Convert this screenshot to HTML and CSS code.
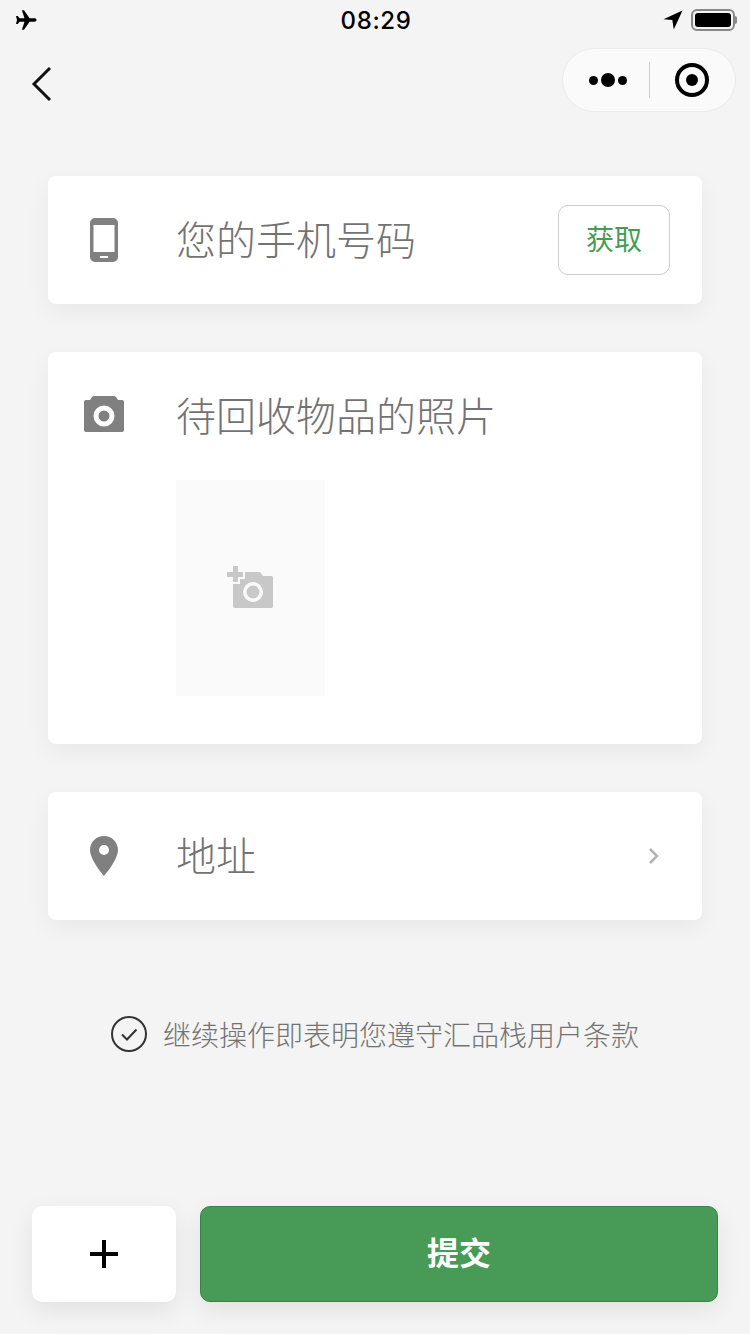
FILE: index.html
```html
<!DOCTYPE html>
<html lang="zh">
<head>
    <meta charset="utf-8">
    <title>提交</title>
    <link rel="stylesheet" href="styles.css">
</head>
<body>
    <div class="page">
        <div class="status-bar">
            <svg class="plane" width="24" height="22" viewBox="0 0 24 22">
                <path d="M21.5 11c0-1.100-1-1.700-2.200-1.700h-4.700L9 1.200H6.900l2.600 8.100H4.600L2.700 7H1l1 4-1 4h1.700l1.900-2.300h4.900L6.900 20.800H9l5.600-8.100h4.700c1.200 0 2.200-.6 2.200-1.700z" fill="#000"/>
            </svg>
            <span class="time">08:29</span>
            <div class="status-right">
                <svg width="20" height="20" viewBox="0 0 20 20">
                    <path d="M19.500 .5 .5 9.300l8.800.8 1.500 9.400z" fill="#000"/>
                </svg>
                <div class="battery"><div class="battery-fill"></div></div>
                <div class="battery-tip"></div>
            </div>
        </div>

        <div class="nav-bar">
            <svg class="back" width="24" height="36" viewBox="0 0 24 36">
                <path d="M20 2 4 18l16 16" fill="none" stroke="#111" stroke-width="3"/>
            </svg>
            <div class="capsule">
                <div class="capsule-dots">
                    <span class="dot"></span>
                    <span class="dot dot-big"></span>
                    <span class="dot"></span>
                </div>
                <div class="capsule-line"></div>
                <div class="capsule-target"><span></span></div>
            </div>
        </div>

        <div class="card row">
            <div class="card-icon">
                <svg width="28" height="44" viewBox="0 0 28 44">
                    <path fill-rule="evenodd" d="M5 0h18a5 5 0 0 1 5 5v34a5 5 0 0 1-5 5H5a5 5 0 0 1-5-5V5a5 5 0 0 1 5-5zM3.500 7v27h21V7zM10 38v2h8v-2z" fill="#808080"/>
                </svg>
            </div>
            <div class="card-label">您的手机号码</div>
            <div class="get-btn">获取</div>
        </div>

        <div class="card photo-card">
            <div class="photo-head">
                <div class="card-icon camera-icon">
                    <svg width="40" height="36" viewBox="0 0 40 36">
                        <path fill-rule="evenodd" d="M2 4h4l2-3c.6-.7 1.500-1 2.500-1h19c1 0 1.900.3 2.500 1l2 3h4a2 2 0 0 1 2 2v28a2 2 0 0 1-2 2H2a2 2 0 0 1-2-2V6a2 2 0 0 1 2-2zM20 9.500a10.500 10.500 0 1 0 0 21 10.500 10.500 0 0 0 0-21zM20 14.500a5.500 5.500 0 1 1 0 11 5.500 5.500 0 0 1 0-11z" fill="#808080"/>
                    </svg>
                </div>
                <div class="card-label">待回收物品的照片</div>
            </div>
            <div class="photo-box">
                <svg width="46" height="42" viewBox="0 0 46 42">
                    <path d="M6 0h5v6h5v5h-5v5H6v-5H0V6h6z" fill="#c8c8c8"/>
                    <path fill-rule="evenodd" d="M18 6h15l3 4h8a2 2 0 0 1 2 2v28a2 2 0 0 1-2 2H8a2 2 0 0 1-2-2V18h7v-5h5zM26 16a10 10 0 1 0 0 20 10 10 0 0 0 0-20zM26 19.500a6.500 6.500 0 1 1 0 13 6.500 6.500 0 0 1 0-13z" fill="#c8c8c8"/>
                </svg>
            </div>
        </div>

        <div class="card row">
            <div class="card-icon">
                <svg width="28" height="40" viewBox="0 0 28 40">
                    <path fill-rule="evenodd" d="M14 0C6.300 0 0 6 0 14c0 10 14 26 14 26s14-16 14-26C28 6 21.700 0 14 0zM14 9a5 5 0 1 1 0 10 5 5 0 0 1 0-10z" fill="#808080"/>
                </svg>
            </div>
            <div class="card-label">地址</div>
            <svg class="chevron" width="12" height="18" viewBox="0 0 12 18">
                <path d="M2 2l7 7-7 7" fill="none" stroke="#b2b2b2" stroke-width="2.500"/>
            </svg>
        </div>

        <div class="terms">
            <svg width="38" height="38" viewBox="0 0 38 38">
                <circle cx="19" cy="19" r="17" fill="none" stroke="#333" stroke-width="2"/>
                <path d="M12 19.500l5 5 9.500-10" fill="none" stroke="#333" stroke-width="2"/>
            </svg>
            <span>继续操作即表明您遵守汇品栈用户条款</span>
        </div>

        <div class="footer">
            <div class="add-btn">
                <svg width="28" height="28" viewBox="0 0 28 28">
                    <path d="M12 0h4v12h12v4H16v12h-4V16H0v-4h12z" fill="#000"/>
                </svg>
            </div>
            <div class="submit-btn">提交</div>
        </div>
    </div>
</body>
</html>
```

FILE: styles.css
```css
body {
    margin: 0;
    background-color: #f4f4f4;
    font-family: "Noto Sans CJK SC", "Noto Sans", sans-serif;
}
.page {
    display: flex;
    flex-direction: column;
    height: 1334px;
    overflow: hidden;
}
.status-bar {
    display: grid;
    grid-template-columns: 1fr auto 1fr;
    align-items: center;
    height: 40px;
    padding: 0 13px 0 15px;
}
.time {
    font-family: "Inter", sans-serif;
    font-size: 24px;
    font-weight: 500;
    letter-spacing: 0.6px;
    color: #000;
}
.status-right {
    display: flex;
    align-items: center;
    justify-content: flex-end;
}
.battery {
    box-sizing: border-box;
    width: 44px;
    height: 22px;
    margin-left: 8px;
    padding: 2px;
    border: 2px solid #888;
    border-radius: 6px;
}
.battery-fill {
    height: 100%;
    background-color: #000;
    border-radius: 3px;
}
.battery-tip {
    width: 2px;
    height: 8px;
    background-color: #888;
    border-radius: 0 2px 2px 0;
}
.nav-bar {
    display: flex;
    align-items: center;
    justify-content: space-between;
    height: 80px;
    padding: 0 14px 0 30px;
    margin-bottom: 56px;
}
.back {
    margin-top: 8px;
}
.capsule {
    display: flex;
    align-items: center;
    box-sizing: border-box;
    width: 174px;
    height: 64px;
    background-color: #fafafa;
    border: 1px solid #ebebeb;
    border-radius: 32px;
}
.capsule-dots {
    display: flex;
    align-items: center;
    justify-content: center;
    box-sizing: border-box;
    gap: 3px;
    width: 86px;
    padding-left: 4px;
}
.dot {
    width: 9px;
    height: 9px;
    background-color: #000;
    border-radius: 50%;
}
.dot-big {
    width: 14px;
    height: 14px;
}
.capsule-line {
    width: 1px;
    height: 36px;
    background-color: #ccc;
}
.capsule-target {
    display: flex;
    align-items: center;
    justify-content: center;
    box-sizing: border-box;
    width: 34px;
    height: 34px;
    margin-left: 25px;
    border: 4px solid #000;
    border-radius: 50%;
}
.capsule-target span {
    width: 12px;
    height: 12px;
    background-color: #000;
    border-radius: 50%;
}
.card {
    box-sizing: border-box;
    width: 654px;
    margin: 0 48px 48px;
    background-color: #fff;
    border-radius: 8px;
    box-shadow: 0 8px 24px rgba(0, 0, 0, 0.05);
}
.row {
    display: flex;
    align-items: center;
    height: 128px;
    padding-right: 32px;
}
.card-icon {
    display: flex;
    align-items: center;
    justify-content: center;
    flex-shrink: 0;
    width: 112px;
    margin-right: 16px;
}
.camera-icon {
    margin-top: -4px;
}
.card-label {
    flex: 1;
    margin-top: -4px;
    font-size: 40px;
    font-weight: 300;
    line-height: 56px;
    color: #737373;
}
.get-btn {
    box-sizing: border-box;
    width: 112px;
    height: 70px;
    border: 1px solid #ccc;
    border-radius: 10px;
    font-size: 28px;
    line-height: 64px;
    text-align: center;
    color: #459c57;
}
.chevron {
    margin-right: 10px;
}
.photo-card {
    height: 392px;
    padding-top: 36px;
}
.photo-head {
    display: flex;
    align-items: center;
    height: 56px;
}
.photo-box {
    display: flex;
    align-items: center;
    justify-content: center;
    width: 149px;
    height: 216px;
    margin: 36px 0 0 128px;
    background-color: #fafafa;
}
.photo-box svg {
    margin: 0 1px 2px 0;
}
.terms {
    display: flex;
    align-items: center;
    gap: 15px;
    height: 40px;
    margin-top: 46px;
    padding-left: 110px;
    font-size: 28px;
    font-weight: 300;
    color: #737373;
}
.footer {
    display: flex;
    gap: 24px;
    margin-top: auto;
    padding: 0 32px 32px;
}
.add-btn {
    display: flex;
    align-items: center;
    justify-content: center;
    width: 144px;
    height: 96px;
    background-color: #fff;
    border-radius: 10px;
    box-shadow: 0 8px 24px rgba(0, 0, 0, 0.08);
}
.submit-btn {
    flex: 1;
    box-sizing: border-box;
    height: 96px;
    background-color: #489b57;
    border: 1px solid #3b8249;
    border-radius: 10px;
    box-shadow: 0 8px 24px rgba(0, 0, 0, 0.08);
    font-size: 32px;
    font-weight: 700;
    line-height: 88px;
    text-align: center;
    color: #fff;
}
```
